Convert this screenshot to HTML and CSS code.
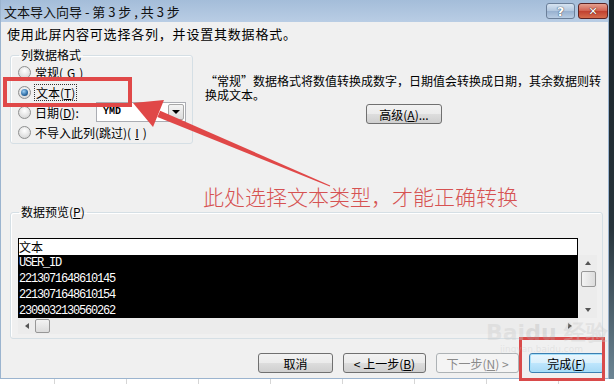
FILE: index.html
```html
<html>
  <head>
    <link rel="stylesheet" href="styles.css">
    <title>文本导入向导</title>
  </head>
  <body>
    <div class="screen">
      <div class="row">
        <div class="window">
          <div class="titlebar">
            <span class="title">文本导入向导 - 第 3 步 , 共 3 步</span>
            <div class="caps">
              <span class="cap help">?</span>
              <span class="cap close">✕</span>
            </div>
          </div>

          <div class="content">
            <p class="intro">使用此屏内容可选择各列，并设置其数据格式。</p>

            <div class="top">
              <fieldset class="group format">
                <legend>列数据格式</legend>
                <label class="opt"><span class="dot"></span>常规(<u>G</u>)</label>
                <label class="opt"><span class="dot on"></span><span class="focus">文本(<u>T</u>)</span></label>
                <label class="opt">
                  <span class="dot"></span><span class="datelbl">日期(<u>D</u>):</span>
                  <span class="select"><span class="val">YMD</span><span class="drop"></span></span>
                </label>
                <label class="opt"><span class="dot"></span>不导入此列(跳过)(<u>I</u>)</label>
              </fieldset>

              <div class="desc">
                <p>“常规”数据格式将数值转换成数字，日期值会转换成日期，其余数据则转</p>
                <p>换成文本。</p>
                <button class="btn adv">高级(<u>A</u>)...</button>
              </div>
            </div>

            <fieldset class="group preview">
              <legend>数据预览(<u>P</u>)</legend>
              <div class="grid">
                <div class="gh">文本</div>
                <div class="gd">
                  <div>USER_ID</div>
                  <div>2213071648610145</div>
                  <div>2213071648610154</div>
                  <div>2309032130560262</div>
                </div>
                <div class="vs">
                  <span class="sb-btn"><i class="tri up"></i></span>
                  <span class="thumb"></span>
                  <span class="fill"></span>
                  <span class="sb-btn"><i class="tri down"></i></span>
                </div>
                <div class="hs">
                  <span class="sb-btn"><i class="tri left"></i></span>
                  <span class="thumb"></span>
                  <span class="fill"></span>
                  <span class="sb-btn"><i class="tri right"></i></span>
                </div>
              </div>
            </fieldset>

            <div class="buttons">
              <button class="btn">取消</button>
              <button class="btn wide">&lt; 上一步(<u>B</u>)</button>
              <button class="btn wide off">下一步(<u>N</u>) &gt;</button>
              <button class="btn default">完成(<u>F</u>)</button>
            </div>
          </div>
        </div>
        <div class="edge"></div>
      </div>
      <div class="sheet"></div>
    </div>

    <!-- annotations drawn over the screenshot -->
    <svg class="marks" width="614" height="384" viewBox="0 0 614 384">
      <rect x="5" y="79" width="125" height="26" fill="none" stroke="#e04848" stroke-width="4"/>
      <rect x="520.5" y="338.5" width="83" height="41" fill="none" stroke="#d94a4a" stroke-width="3"/>
      <polygon fill="#e04848" points="133,103 164,100 153,127"/>
      <polygon fill="#e04848" points="157.4,117.1 160.2,110.7 330.2,185.5 329.8,186.5"/>
    </svg>
    <div class="note">此处选择文本类型，才能正确转换</div>
    <div class="wm">Bai<b>du</b> 经验<small>jingyan.baidu.com</small></div>
  </body>
</html>
```

FILE: styles.css
```css
* {
  box-sizing: border-box;
}
html, body {
  margin: 0;
}
body {
  width: 614px;
  height: 384px;
  overflow: hidden;
  position: relative;
  background: #fff;
  font-family: "Noto Sans CJK SC", "Liberation Sans", sans-serif;
  font-size: 12px;
  color: #000;
}

.screen {
  display: flex;
  flex-direction: column;
  height: 100%;
}
.row {
  display: flex;
}
.edge {
  flex: 1;
  background: linear-gradient(#1b2429, #27343b 60%, #6c8594);
}
.sheet {
  flex: 1;
  background: repeating-linear-gradient(90deg, #fff 0, #fff 54px, #d6d6d6 54px, #d6d6d6 55px, #fff 55px, #fff 72px);
}

.window {
  width: 609px;
  height: 379px;
  background: #f0f0f0;
  border: 1px solid #9bb4cf;
  border-top: 0;
  display: flex;
  flex-direction: column;
}

.titlebar {
  height: 22px;
  flex: none;
  display: flex;
  justify-content: space-between;
  background: linear-gradient(#a4bdd9, #b9cde4);
  padding-left: 3px;
}
.title {
  font-size: 13px;
  line-height: 23px;
  color: #111;
  white-space: pre;
}
.caps {
  display: flex;
  gap: 3px;
  padding-top: 3px;
}
.cap {
  height: 16px;
  border-radius: 3px;
  text-align: center;
  font-family: "DejaVu Sans", sans-serif;
  font-weight: bold;
  line-height: 15px;
  color: #fff;
}
.help {
  width: 29px;
  border: 1px solid #6b7f99;
  background: linear-gradient(#d6e3f1, #b1c6de 50%, #97b0cf 51%, #b8cce3);
  font-size: 13px;
  text-shadow: 0 0 1px #33465e, 0 0 1px #33465e;
}
.close {
  width: 30px;
  border: 1px solid #5b2323;
  background: linear-gradient(#e5a090, #d0604f 50%, #c0402f 51%, #d56c4c);
  font-size: 11px;
  text-shadow: 0 0 1px #4a1a12, 0 0 1px #4a1a12;
}

.content {
  flex: 1;
  display: flex;
  flex-direction: column;
  padding: 4px 5px 0 6px;
}
.intro {
  margin: 0;
  font-size: 13px;
  letter-spacing: 0.8px;
  line-height: 15px;
  height: 15px;
}

.group {
  margin: 0 0 0 3px;
  border: 1px solid #d5dfe5;
  border-radius: 3px;
  box-shadow: inset 1px 1px 0 #fff;
}
.group legend {
  padding: 0 2px;
  margin-left: 1px;
  line-height: 14px;
  height: 14px;
}

.top {
  display: flex;
  margin-top: 7px;
}
.format {
  width: 183px;
  height: 96px;
  padding: 0 0 0 7px;
}
.opt {
  display: flex;
  align-items: center;
  height: 20px;
  gap: 4px;
}
.dot {
  width: 13px;
  height: 13px;
  border-radius: 50%;
  border: 1px solid #8e8f8f;
  background: radial-gradient(circle at 50% 35%, #fff, #e2e2e2 60%, #cfcfcf);
  display: flex;
  align-items: center;
  justify-content: center;
}
.dot.on::after {
  content: "";
  width: 7px;
  height: 7px;
  border-radius: 50%;
  background: radial-gradient(circle at 40% 35%, #9cd0f5, #2b6aa3 60%, #173c60);
}
.focus {
  outline: 1px dotted #333;
  outline-offset: 0;
  padding: 0 1px;
  line-height: 15px;
}
.datelbl {
  width: 57px;
}
.select {
  width: 90px;
  height: 20px;
  border: 1px solid #abadb3;
  background: #fff;
  display: flex;
  justify-content: space-between;
}
.val {
  font-family: "Liberation Mono", monospace;
  font-weight: bold;
  font-size: 10px;
  line-height: 18px;
  padding-left: 6px;
}
.drop {
  width: 16px;
  margin: 1px;
  border: 1px solid #a7a7a7;
  border-radius: 2px;
  background: linear-gradient(#f4f4f4, #dcdcdc);
  display: flex;
  align-items: center;
  justify-content: center;
}
.drop::after {
  content: "";
  border-left: 4px solid transparent;
  border-right: 4px solid transparent;
  border-top: 4px solid #000;
}

.desc {
  flex: 1;
  padding: 26px 0 0 12px;
  display: flex;
  flex-direction: column;
  align-items: center;
}
.desc p {
  margin: 0;
  align-self: stretch;
  height: 14px;
  line-height: 14px;
  white-space: nowrap;
}

.btn {
  height: 20px;
  width: 75px;
  padding: 0;
  border: 1px solid #707070;
  border-radius: 3px;
  background: linear-gradient(#f2f2f2, #ebebeb 50%, #dddddd 51%, #cfcfcf);
  font-family: inherit;
  font-size: 12px;
  line-height: 17px;
  color: #000;
}
.adv {
  width: 76px;
  margin-top: 2px;
}
.btn.wide {
  width: 83px;
}
.btn.off {
  border-color: #adb2b5;
  background: #f4f4f4;
  color: #8a8a8a;
}
.btn.default {
  border-color: #3c7fb1;
  background: linear-gradient(#eaf6fd, #d9f0fc 50%, #bee6fd 51%, #a7d9f5);
  box-shadow: inset 0 0 0 1px #a6e0fa;
}

.preview {
  margin-top: 61px;
  width: 593px;
  height: 134px;
  padding: 19px 5px 0 7px;
}
.grid {
  display: grid;
  grid-template-columns: 560px 1px 18px;
  grid-template-rows: 17px 63px 16px;
}
.gh {
  grid-column: 1;
  grid-row: 1;
  border: 1px solid #000;
  border-bottom: 0;
  background: #fff;
  line-height: 16px;
}
.gd {
  grid-column: 1;
  grid-row: 2;
  background: #000;
  color: #fff;
  font-family: "Liberation Mono", monospace;
  font-size: 12px;
  letter-spacing: -1.2px;
  line-height: 16px;
  overflow: hidden;
  padding-left: 1px;
}
.vs, .hs {
  display: flex;
  background: #ececec;
}
.vs {
  grid-column: 3;
  grid-row: 2;
  flex-direction: column;
  align-items: center;
}
.hs {
  grid-column: 1;
  grid-row: 3;
  align-items: center;
}
.sb-btn {
  width: 17px;
  height: 17px;
  flex: none;
  display: flex;
  align-items: center;
  justify-content: center;
}
.hs .sb-btn {
  height: 15px;
}
.vs .sb-btn {
  height: 16px;
}
.fill {
  flex: 1;
}
.thumb {
  flex: none;
  border: 1px solid #979797;
  border-radius: 2px;
  background: linear-gradient(90deg, #f3f3f3, #dcdcdc);
}
.vs .thumb {
  width: 15px;
  height: 16px;
}
.hs .thumb {
  width: 15px;
  height: 14px;
  background: linear-gradient(#f3f3f3, #dcdcdc);
}
.tri {
  width: 0;
  height: 0;
  border: 3px solid transparent;
}
.tri.up {
  border-bottom: 4px solid #555;
  border-top: 0;
}
.tri.down {
  border-top: 4px solid #555;
  border-bottom: 0;
}
.tri.left {
  border-right: 4px solid #555;
  border-left: 0;
}
.tri.right {
  border-left: 4px solid #555;
  border-right: 0;
}

.buttons {
  display: flex;
  justify-content: flex-end;
  gap: 10px;
  margin: 14px -1px 0 0;
}

.marks {
  position: absolute;
  top: 0;
  left: 0;
  pointer-events: none;
}
.note {
  position: absolute;
  left: 203px;
  top: 183px;
  font-size: 21px;
  font-weight: 300;
  line-height: 26px;
  color: #d65252;
  white-space: nowrap;
}
.wm {
  position: absolute;
  left: 486px;
  top: 322px;
  font-family: "DejaVu Sans", sans-serif;
  font-size: 22px;
  font-weight: bold;
  line-height: 22px;
  color: rgba(200, 200, 200, 0.35);
  white-space: nowrap;
}
.wm b {
  color: rgba(170, 170, 170, 0.3);
}
.wm small {
  display: block;
  font-size: 9px;
  font-weight: normal;
  line-height: 11px;
  padding-left: 14px;
}
```
